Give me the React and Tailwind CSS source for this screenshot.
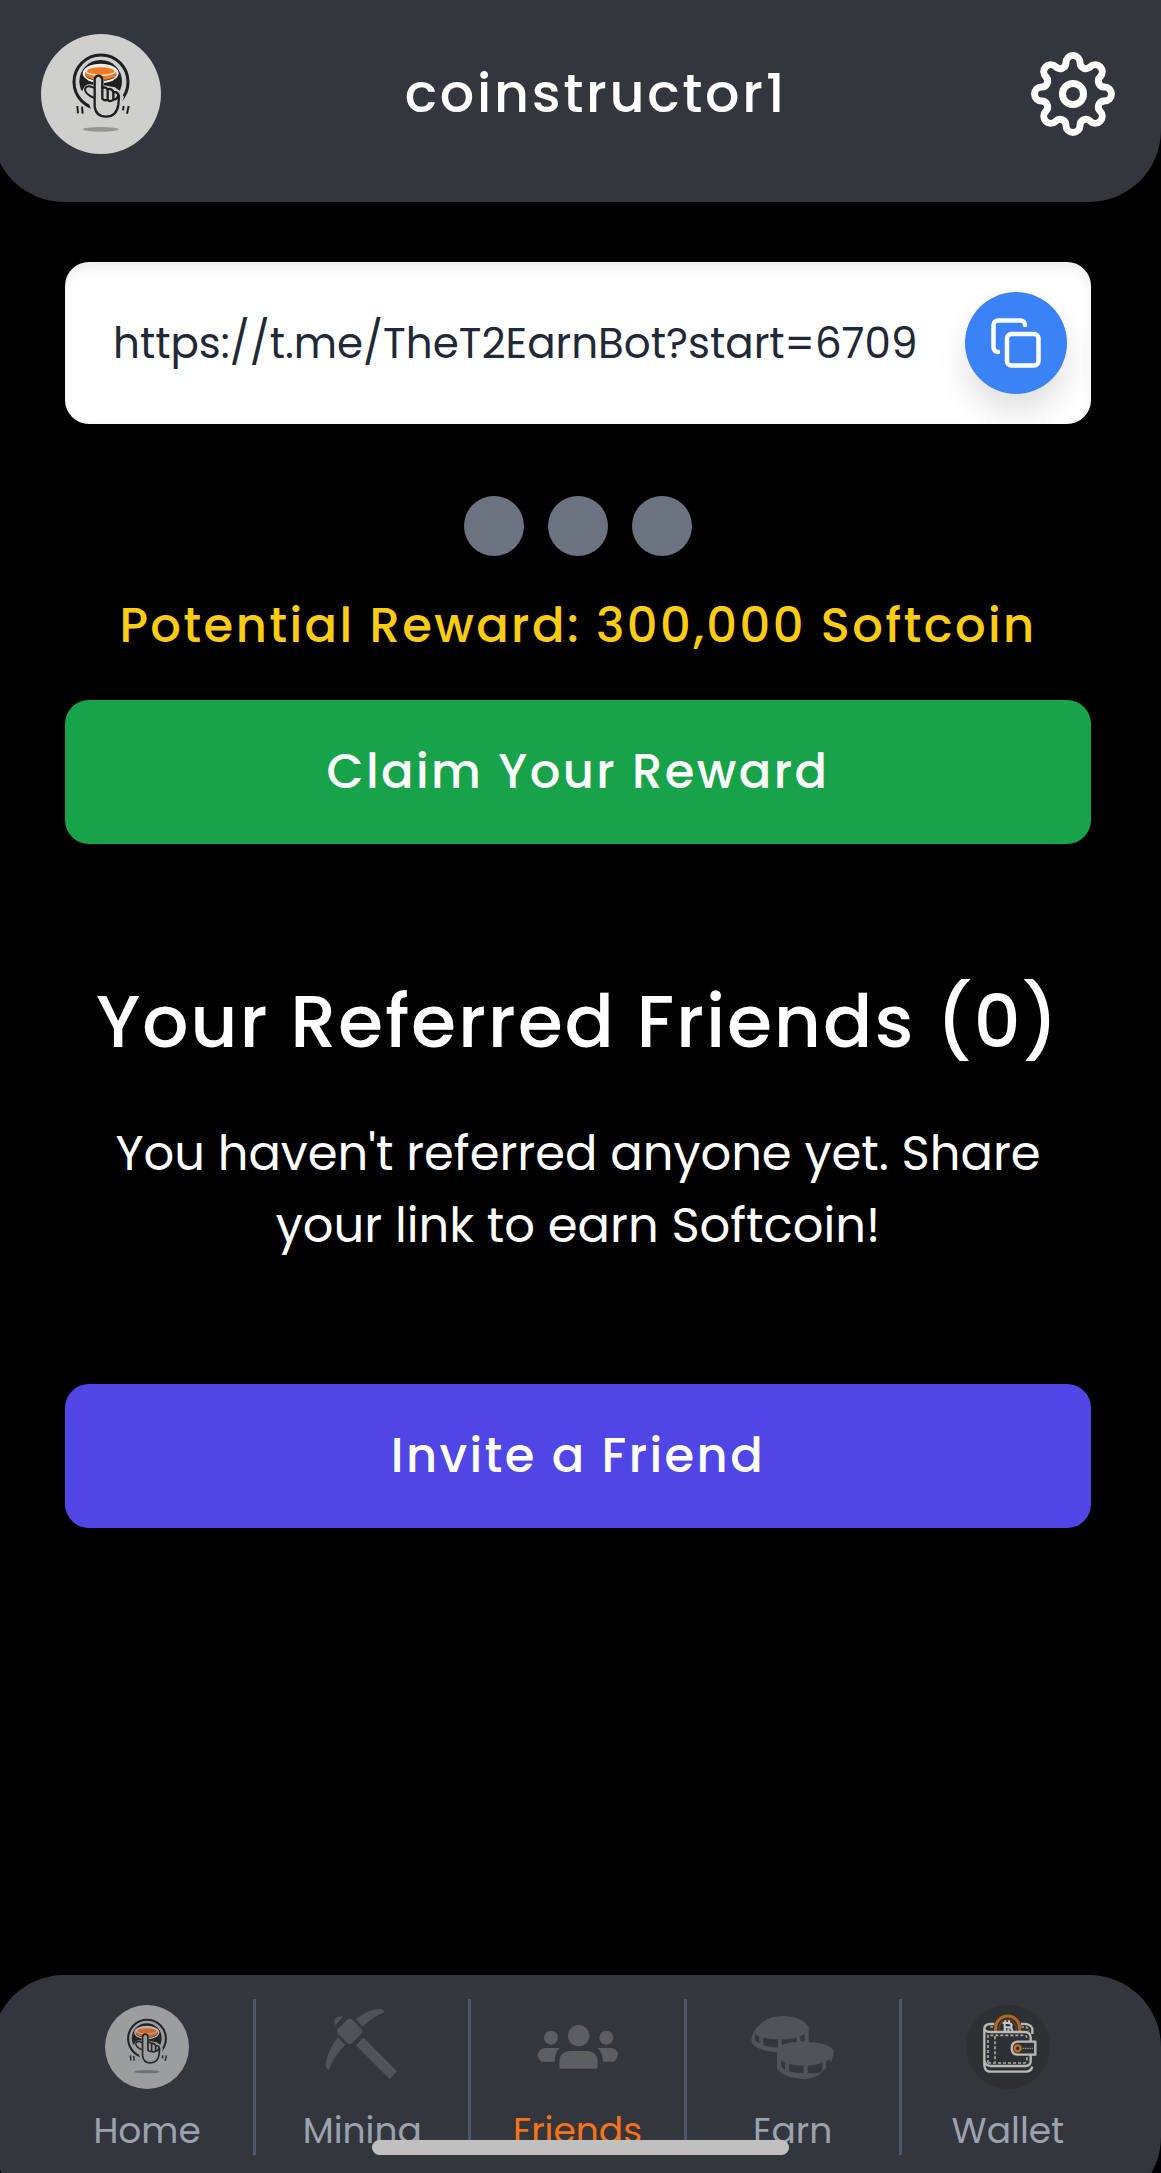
import React, { useState } from "react";
import { Copy } from "lucide-react";

const DARK = "#1d1f20";

function TapLogo({ className, bg = "#cfcfcd", line = DARK, coin = "#f47a20", rim = "#eeeeec" }) {
  return (
    <svg viewBox="123 102 360 360" className={className} aria-hidden="true">
      <circle cx="303" cy="282" r="180" fill={bg} />
      <circle cx="302" cy="244" r="64" fill={line} />
      <path d="M236 270 L262 274 L300 290 L344 262 L370 280 L360 312 H240Z" fill={bg} />
      <circle cx="303" cy="246" r="81" fill="none" stroke={line} strokeWidth="9" />
      <ellipse cx="302" cy="220" rx="54" ry="29" fill={rim} />
      <ellipse cx="302" cy="223" rx="47" ry="20" fill={line} />
      <path d="M255 212 v10 c4 24 90 24 94 0 v-10z" fill={coin} />
      <ellipse cx="302" cy="212" rx="47" ry="16" fill={rim} />
      <ellipse cx="302" cy="213" rx="41" ry="11" fill={coin} />
      <path
        d="M274 332 L264 300 Q246 286 249 268 Q256 248 280 254 L280 238 Q295 210 312 240 L312 256 L344 262 L364 282 L372 290 L362 318 Q352 362 318 360 Q282 358 274 332Z"
        fill={bg}
      />
      <path
        d="M283 264 Q262 252 255 266 Q253 282 283 294"
        fill={bg}
        stroke={line}
        strokeWidth="6"
        strokeLinecap="round"
        strokeLinejoin="round"
      />
      <path
        d="M284 320 L284 238 Q286 227 295 227 Q305 227 307 238 L307 264 Q315 259 323 268 Q334 263 341 277 Q353 274 357 288 L355 314 Q350 350 318 350 Q288 350 284 320Z"
        fill={bg}
        stroke={line}
        strokeWidth="7"
        strokeLinejoin="round"
      />
      <path
        d="M307 262 V296 Q314 304 323 299 V270 M323 299 Q330 308 340 299 V276 M340 299 Q350 300 354 288"
        fill="none"
        stroke={line}
        strokeWidth="7"
        strokeLinecap="round"
      />
      <path d="M232 318 L234 340 M246 320 L248 341 M371 318 L369 331 M386 318 L381 341" stroke={line} strokeWidth="6" />
      <ellipse cx="302" cy="388" rx="54" ry="7" fill="#000" opacity="0.28" />
    </svg>
  );
}

function gearPath() {
  const parts = [];
  for (let i = 0; i < 8; i += 1) {
    const t = (i * Math.PI) / 4;
    const spin = (x, y) =>
      `${(x * Math.cos(t) - y * Math.sin(t)).toFixed(2)} ${(x * Math.sin(t) + y * Math.cos(t)).toFixed(2)}`;
    parts.push(i === 0 ? `M${spin(-7, -31.45)}` : `A6 6 0 0 0 ${spin(-7, -31.45)}`);
    parts.push(`A7 7 0 0 1 ${spin(7, -31.45)}`);
  }
  return `${parts.join(" ")} A6 6 0 0 0 -7 -31.45Z`;
}

function GearIcon({ className }) {
  return (
    <svg viewBox="-42 -42 84 84" className={className} fill="none" stroke="currentColor" strokeWidth="7" aria-hidden="true">
      <path d={gearPath()} strokeLinejoin="round" />
      <circle r="10.5" />
    </svg>
  );
}

function HomeIcon({ className }) {
  return <TapLogo className={className} bg="#9b9d9e" line="#232527" coin="#d0682a" rim="#b4b5b5" />;
}

function PickaxeIcon({ className }) {
  return (
    <svg viewBox="180 135 252 252" className={className} fill="#505357" aria-hidden="true">
      <rect x="239" y="184" width="60" height="60" rx="11" transform="rotate(45 269 214)" />
      <path d="M287 178 Q325 147 362 146 L375 155 Q338 170 308 200Z" />
      <path d="M234 232 L256 254 Q222 288 206 330 Q193 322 198 303 Q207 266 234 232Z" />
      <path d="M223 193 Q219 168 250 169 L228 194Z" />
      <path d="M310 233 L411 334 L389 357 L288 256Z" />
    </svg>
  );
}

function FriendsIcon({ className }) {
  return (
    <svg viewBox="168 135 252 252" className={className} fill="#5c5e62" aria-hidden="true">
      <circle cx="299" cy="227" r="32" />
      <circle cx="216" cy="233" r="21" />
      <circle cx="382" cy="233" r="21" />
      <path d="M241 320 V303 Q243 274 274 273 H324 Q354 274 356 303 V320 Q356 326 350 326 H247 Q241 326 241 320Z" />
      <path d="M242 264 Q227 278 227 305 H187 Q179 300 175 286 Q179 264 202 264Z" />
      <path d="M356 264 H395 Q412 266 418 280 Q413 300 405 305 H372 Q371 278 356 264Z" />
    </svg>
  );
}

function CoinsIcon({ className }) {
  return (
    <svg viewBox="186 135 252 252" className={className} aria-hidden="true">
      <g fill="#505357">
        <path d="M187 240 Q190 210 220 187 Q245 168 280 168 Q340 170 359 200 V250 Q320 280 264 277 Q187 270 187 240Z" />
        <path d="M264 277 Q270 246 350 246 Q425 248 435 274 L427 306 Q422 300 412 320 Q390 357 340 357 Q280 352 264 325Z" />
      </g>
      <g fill="#33363d">
        <path d="M198 222 L211 231 V250 Q200 246 198 237Z" />
        <path d="M223 233 Q245 238 267 238 V263 Q242 262 223 256Z" />
        <path d="M278 238 Q305 238 323 232 V245 Q300 246 278 254Z" />
        <path d="M334 228 L347 222 V244 H334Z" />
        <path d="M276 300 L288 309 V329 Q277 324 276 316Z" />
        <path d="M300 312 Q322 317 344 317 V340 Q318 340 300 334Z" />
        <path d="M356 317 Q380 316 400 309 V332 Q394 339 384 340 H356Z" />
        <path d="M411 304 L423 298 L424 308 L411 321Z" />
      </g>
    </svg>
  );
}

function WalletIcon({ className }) {
  return (
    <svg viewBox="231 135 252 252" className={className} fill="none" aria-hidden="true">
      <circle cx="357" cy="261" r="126" fill="#2e3033" />
      <path d="M320 214 V204 A36 36 0 0 1 392 204 V214" stroke="#b3681f" strokeWidth="9" />
      <path d="M330 214 V205 A26 26 0 0 1 382 205 V214" stroke="#6a431f" strokeWidth="4" />
      <g stroke="#c8c8c6" strokeWidth="6">
        <path d="M341 189 H357 Q368 189 368 197 Q368 202 357 202 H347 M357 202 Q370 203 370 213 M347 189 V214 M349 181 V189 M360 181 V189 M349 208 V214 M358 206 V214" />
      </g>
      <g stroke="#b9bab8" strokeWidth="7" strokeLinejoin="round">
        <path d="M316 192 H304 Q286 193 286 207 V316 Q288 335 304 335 H410 Q426 335 430 320" />
        <path d="M286 207 Q288 216 306 216 H407 Q424 216 425 232 V243" />
        <path d="M396 192 Q426 190 430 206 V222" />
        <path d="M286 302 Q288 317 306 318 H410 Q424 317 425 304 V285" />
        <path d="M439 245 H385 Q368 247 368 265 Q368 283 385 284 H439Z" />
      </g>
      <g stroke="#a9aaa8" strokeWidth="5" strokeDasharray="9 6">
        <path d="M297 309 V226 H408 Q414 227 414 240" />
        <path d="M297 309 H406 Q414 308 414 292" />
        <path d="M318 229 V307" />
      </g>
      <path d="M304 201 H316 M397 201 H408 Q418 202 419 212" stroke="#a9aaa8" strokeWidth="5" strokeDasharray="8 5" />
      <circle cx="386" cy="265" r="9" stroke="#c4701f" strokeWidth="7" />
      <path d="M401 265 H432" stroke="#8b8c8b" strokeWidth="4" strokeDasharray="5 2" />
    </svg>
  );
}

const TABS = [
  { label: "Home", Icon: HomeIcon },
  { label: "Mining", Icon: PickaxeIcon },
  { label: "Friends", Icon: FriendsIcon },
  { label: "Earn", Icon: CoinsIcon },
  { label: "Wallet", Icon: WalletIcon },
];

function Header() {
  return (
    <header className="-ml-2 flex items-center justify-between rounded-b-[72px] bg-[#33363d] pt-[34px] pr-[46px] pb-12 pl-[49px]">
      <TapLogo className="size-[120px]" />
      <h1 className="pb-0.5 text-[54px] leading-[84px] font-medium tracking-wider">coinstructor1</h1>
      <button type="button" aria-label="Settings">
        <GearIcon className="size-[84px]" />
      </button>
    </header>
  );
}

function ReferralLink() {
  return (
    <div className="flex items-center rounded-3xl bg-white py-[30px] pr-6 pl-12 shadow-[inset_0_6px_12px_rgba(0,0,0,0.07)]">
      <input
        type="text"
        readOnly
        aria-label="Referral link"
        value="https://t.me/TheT2EarnBot?start=6709"
        className="min-w-0 flex-1 bg-transparent text-[42px] text-[#1f2937] outline-none"
      />
      <button
        type="button"
        aria-label="Copy link"
        className="flex size-[102px] shrink-0 items-center justify-center rounded-full bg-[#3b82f6] shadow-[0_18px_30px_rgba(0,0,0,0.12)]"
      >
        <Copy className="size-[54px]" />
      </button>
    </div>
  );
}

function TabBar() {
  const [active, setActive] = useState("Friends");
  return (
    <nav className="-mb-9 -ml-2 rounded-[72px] bg-[#33363d] pt-6 pr-11 pb-[54px] pl-[49px]">
      <ul className="grid grid-cols-5">
        {TABS.map(({ label, Icon }, i) => (
          <li key={label} className={i < TABS.length - 1 ? "border-r-[3px] border-[#4b5866]" : "pr-[3px]"}>
            <button
              type="button"
              onClick={() => setActive(label)}
              className={`flex h-[156px] w-full flex-col items-center pt-1.5 text-[36px] leading-[54px] ${
                active === label ? "text-[#f97316]" : "text-[#9ca3af]"
              }`}
            >
              <Icon className="mb-[15px] size-[84px] shrink-0" />
              {label}
            </button>
          </li>
        ))}
      </ul>
    </nav>
  );
}

export default function App() {
  return (
    <div className="relative flex min-h-screen flex-col overflow-hidden bg-black font-['Poppins',Inter,sans-serif] text-white">
      <Header />
      <main className="flex flex-1 flex-col pt-15 pr-[70px] pl-[65px] text-center">
        <ReferralLink />
        <div className="mt-18 flex justify-center gap-6" aria-hidden="true">
          <span className="size-15 rounded-full bg-[#6b7280]" />
          <span className="size-15 rounded-full bg-[#6b7280]" />
          <span className="size-15 rounded-full bg-[#6b7280]" />
        </div>
        <p className="mt-7 text-[48px] leading-[84px] font-medium tracking-wider text-[#facc15]">Potential Reward: 300,000 Softcoin</p>
        <button type="button" className="mt-8 h-36 rounded-3xl bg-[#18a34a] text-[48px] font-medium tracking-wider">
          Claim Your Reward
        </button>
        <h2 className="mt-[138px] text-[73px] leading-[80px] font-medium tracking-wide">Your Referred Friends (0)</h2>
        <p className="mt-14 px-10 text-[48px] leading-[72px]">You haven't referred anyone yet. Share your link to earn Softcoin!</p>
        <button type="button" className="mt-[122px] h-36 rounded-3xl bg-[#4f46e5] text-[48px] font-medium tracking-wider">
          Invite a Friend
        </button>
      </main>
      <TabBar />
      <div className="absolute bottom-[18px] left-1/2 h-[15px] w-[36%] -translate-x-1/2 rounded-full bg-[#c0c0c0]" />
    </div>
  );
}
